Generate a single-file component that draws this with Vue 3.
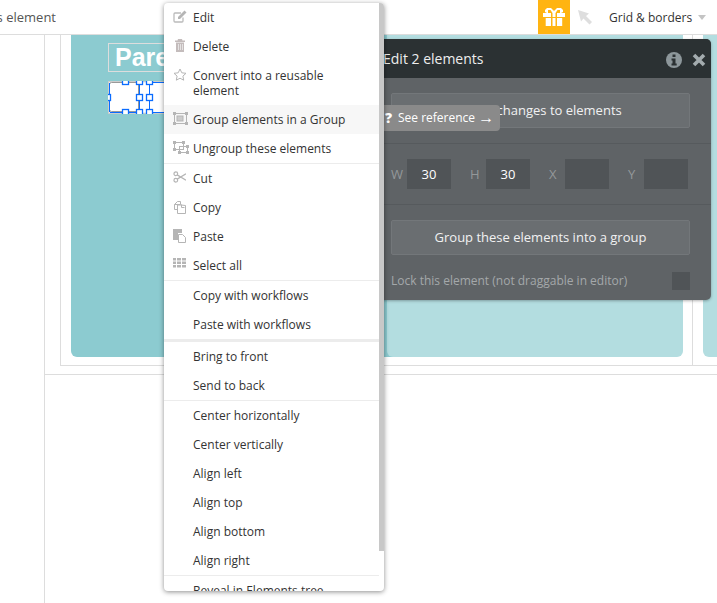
<script setup>
const itemsA = [
  { label: 'Cut', icon: 'cut' },
  { label: 'Copy', icon: 'copy' },
  { label: 'Paste', icon: 'paste' },
  { label: 'Select all', icon: 'grid' },
]
const aligns = ['Center horizontally', 'Center vertically', 'Align left', 'Align top', 'Align bottom', 'Align right']
const fields = [
  { k: 'W', v: '30' },
  { k: 'H', v: '30' },
  { k: 'X', v: '' },
  { k: 'Y', v: '' },
]
</script>

<template>
  <div class="page">
    <header class="topbar">
      <div class="crumb"><span>this element</span></div>
      <div class="spacer"></div>
      <div class="gift">
        <svg width="22" height="18" viewBox="0 0 22 18"><path fill="#fff" d="M4 0h4l3 3 3-3h4l2 2v2l-2 1h4v4H0V5h4L2 4V2z"/><path fill="#ffb412" d="M5 2h2.500l2 3H5zM17 2h-2.500l-2 3H17z"/><path fill="#fff" d="M2 10h16.500v8H2z" transform="translate(.7 0)"/><path fill="#ffb412" d="M8 5h1.500v13H8zM12.500 5H14v13h-1.500z"/></svg>
      </div>
      <svg class="cursor" width="17" height="17" viewBox="0 0 17 17"><path fill="#dedede" d="M1 1l11 3.500-3 2.500 6 6-2.500 2.500-6-6-2.500 3z"/></svg>
      <div class="grid-menu">Grid &amp; borders<i class="caret"></i></div>
    </header>

    <div class="canvas">
      <div class="line v1"></div>
      <div class="line v2"></div>
      <div class="line v3"></div>
      <div class="line h1"></div>
      <div class="line h2"></div>
      <div class="teal t1">
        <div class="parent">Parent</div>
      </div>
      <div class="teal t2"></div>
      <div class="teal t3"></div>
      <svg class="selection" width="60" height="33" viewBox="0 0 60 33">
        <rect x="0.500" y="0.500" width="59" height="32" fill="#e8f1f2" stroke="#ccc"/>
        <rect x="1.500" y="1.500" width="29" height="29" rx="2" fill="#fff" stroke="#999"/>
        <rect x="32" y="2" width="28" height="29" fill="#fff"/>
        <path stroke="#0a6cff" fill="none" d="M2 31.500h30M1.500 2v29M31.500 1v30M41.500 1.500h19M41.500 1.500v30h19"/>
        <g fill="#fff" stroke="#0a6cff" stroke-width="1.300">
          <rect x="14.500" y="-2.500" width="6" height="6"/>
          <rect x="14.500" y="28.500" width="6" height="6"/>
          <rect x="-2.500" y="13.500" width="5" height="6"/>
          <rect x="28.500" y="13.500" width="6" height="6"/>
          <rect x="28.500" y="-2.500" width="6" height="6"/>
          <rect x="28.500" y="28.500" width="6" height="6"/>
          <rect x="38.500" y="13.500" width="6" height="6"/>
          <rect x="38.500" y="-2.500" width="6" height="6"/>
          <rect x="38.500" y="28.500" width="6" height="6"/>
        </g>
      </svg>
    </div>

    <section class="panel">
      <div class="panel-head">
        <span>Edit 2 elements</span>
        <div class="head-icons">
          <svg width="16" height="16" viewBox="0 0 16 16"><circle cx="8" cy="8" r="8" fill="#8d979b"/><path fill="#2b3133" d="M6.500 2.500h3v2.500h-3zM5.500 6.500h4v5h1.200v2H5.500v-2h1v-3h-1z"/></svg>
          <svg width="14" height="14" viewBox="0 0 14 14"><path stroke="#a3abae" stroke-width="3.600" d="M2 2l10 10M12 2L2 12"/></svg>
        </div>
      </div>
      <div class="panel-block">
        <button class="pbtn">Apply changes to elements</button>
      </div>
      <div class="panel-block fields">
        <div v-for="f in fields" :key="f.k" class="field">
          <label>{{ f.k }}</label>
          <div class="input">{{ f.v }}</div>
        </div>
      </div>
      <div class="panel-last">
        <button class="pbtn">Group these elements into a group</button>
        <div class="lock">
          <span>Lock this element (not draggable in editor)</span>
          <i class="check"></i>
        </div>
      </div>
    </section>

    <div class="tooltip"><b>?</b>See reference <span class="arrow">→</span></div>

    <nav class="menu">
      <i class="scrollbar"></i>
      <div class="item">
        <svg class="ic" width="14" height="13" viewBox="0 0 14 13"><path fill="none" stroke="#bbb" stroke-width="1.300" d="M10 7.500V11a1 1 0 0 1-1 1H2a1 1 0 0 1-1-1V4a1 1 0 0 1 1-1h6"/><path fill="#b5b5b5" d="M5 7l6.500-6.500 2 2L7 9H5z"/></svg>
        Edit
      </div>
      <div class="item">
        <svg class="ic" width="14" height="13" viewBox="0 0 14 13"><path fill="#c4bcbc" d="M5 0h4l.5 1.500H12V3H2V1.500h2.500zM3 3.500h8V13H3z"/><path stroke="#eee" d="M5.500 5v6M7.500 5v6M9.500 5v6" fill="none" stroke-width=".8"/></svg>
        Delete
      </div>
      <div class="item two">
        <svg class="ic" width="14" height="13" viewBox="0 0 14 13"><path fill="none" stroke="#b5b5b5" d="M7 1l1.800 3.800 4.200.5-3.100 2.800.8 4.100L7 10.200l-3.700 2 .8-4.100L1 5.300l4.200-.5z"/></svg>
        Convert into a reusable element
      </div>
      <div class="item hover">
        <svg class="ic" width="15" height="13" viewBox="0 0 15 13"><rect x="1.500" y="1.500" width="12" height="10" fill="none" stroke="#b5b5b5"/><rect x="4" y="4" width="6" height="5" fill="#ccc" stroke="#b5b5b5"/><path fill="#b5b5b5" d="M0 0h3v3H0zM12 0h3v3h-3zM0 10h3v3H0zM12 10h3v3h-3z"/></svg>
        Group elements in a Group
      </div>
      <div class="item sep">
        <svg class="ic" width="16" height="13" viewBox="0 0 16 13"><rect x="1.500" y="1.500" width="9" height="7" fill="none" stroke="#b5b5b5"/><rect x="6.500" y="5.500" width="8" height="6" fill="none" stroke="#b5b5b5"/><path fill="#b5b5b5" d="M0 0h3v3H0zM9 0h3v3H9zM0 7h3v3H0zM13 4h3v3h-3zM5 10h3v3H5zM13 10h3v3h-3z"/></svg>
        Ungroup these elements
      </div>
      <div v-for="(it, i) in itemsA" :key="it.label" class="item" :class="{ sep: i === 3 }">
        <svg v-if="it.icon === 'cut'" class="ic" width="13" height="12" viewBox="0 0 14 13"><circle cx="3" cy="3" r="2" fill="none" stroke="#b5b5b5" stroke-width="1.300"/><circle cx="3" cy="10" r="2" fill="none" stroke="#b5b5b5" stroke-width="1.300"/><path stroke="#b5b5b5" stroke-width="1.300" d="M4.500 4.200L14 10M4.500 8.800L14 3"/></svg>
        <svg v-else-if="it.icon === 'copy'" class="ic" width="13" height="14" viewBox="0 0 13 14"><path fill="none" stroke="#b5b5b5" d="M4.500 1.500h3v3h-6v5h3M4.500 1.500l-3 3"/><path fill="none" stroke="#b5b5b5" d="M8 5h-3.500v8.500h8V5.500zM8.500 4.500v3h3"/></svg>
        <svg v-else-if="it.icon === 'paste'" class="ic" width="13" height="14" viewBox="0 0 13 14"><path fill="#b5b5b5" d="M0 0h9v4H5v7H0z"/><path fill="#fff" stroke="#b5b5b5" d="M5.500 5.500h4l3 3v5h-7z"/></svg>
        <svg v-else class="ic" width="13" height="10" viewBox="0 0 13 10"><path fill="#b5b5b5" d="M0 0h3v2.500H0zM4 0h4v2.500H4zM9 0h4v2.500H9zM0 3.500h3V6H0zM4 3.500h4V6H4zM9 3.500h4V6H9zM0 7h3v2.500H0zM4 7h4v2.500H4zM9 7h4v2.500H9z"/></svg>
        {{ it.label }}
      </div>
      <div class="item">Copy with workflows</div>
      <div class="item thick">Paste with workflows</div>
      <div class="item">Bring to front</div>
      <div class="item sep">Send to back</div>
      <div v-for="(a, i) in aligns" :key="a" class="item" :class="{ sep: i === 5 }">{{ a }}</div>
      <div class="item">Reveal in Elements tree</div>
    </nav>
  </div>
</template>

<style>
html, body { margin: 0; background: #fff; }
</style>

<style scoped>
.page {
  position: relative;
  width: 717px;
  height: 603px;
  overflow: hidden;
  background: #fff;
  font-family: "Open Sans", sans-serif;
  font-size: 13px;
  color: #333;
}
.topbar {
  display: flex;
  align-items: center;
  height: 34px;
  border-bottom: 1px solid #ddd;
  background: #fff;
}
.crumb {
  display: flex;
  justify-content: flex-end;
  width: 56px;
  overflow: hidden;
  white-space: nowrap;
  color: #555;
}
.spacer { flex: 1; }
.gift {
  display: flex;
  align-items: center;
  justify-content: center;
  width: 32px;
  height: 34px;
  background: #ffb412;
}
.cursor { margin: 0 15px 0 7px; }
.grid-menu {
  display: flex;
  align-items: center;
  width: 108px;
  font-size: 12px;
  color: #333;
  white-space: nowrap;
}
.caret {
  margin-left: 6px;
  border: 4px solid transparent;
  border-top: 5px solid #c4c4c4;
  border-bottom: 0;
}

.canvas { position: absolute; left: 0; top: 35px; width: 717px; height: 568px; }
.line { position: absolute; background: #ddd; }
.v1 { left: 44px; top: 0; width: 1px; height: 568px; }
.v2 { left: 60px; top: 0; width: 1px; height: 330px; }
.v3 { left: 692px; top: 0; width: 1px; height: 330px; }
.h1 { left: 60px; top: 330px; right: 0; height: 1px; }
.h2 { left: 44px; top: 339px; right: 0; height: 1px; }
.teal {
  position: absolute;
  top: 0;
  height: 322px;
  border-radius: 0 0 6px 6px;
  background: #b3dde0;
}
.t1 { left: 71px; width: 340px; background: #8ccbd0; }
.t2 { left: 387px; width: 296px; }
.t3 { left: 703px; width: 40px; }
.parent {
  position: absolute;
  left: 37px;
  top: 8px;
  width: 200px;
  height: 27px;
  padding-left: 6px;
  border: 1px solid #ddd;
  font: bold 25px/26px "Liberation Sans", sans-serif;
  color: #fff;
}
.selection { position: absolute; left: 108px; top: 46px; }

.panel {
  position: absolute;
  left: 372px;
  top: 39px;
  width: 339px;
  height: 261px;
  border-radius: 5px;
  overflow: hidden;
  background: #5f6366;
  box-shadow: 0 1px 3px rgba(0, 0, 0, .3);
}
.panel-head {
  display: flex;
  align-items: center;
  justify-content: space-between;
  height: 39px;
  padding: 0 5px 0 11px;
  background: #2b3133;
  color: #eee;
  font-size: 14px;
}
.head-icons { display: flex; align-items: center; gap: 10px; padding-top: 2px; }
.panel-block {
  box-sizing: border-box;
  height: 66px;
  padding: 15px 21px 0 19px;
  border-bottom: 1px solid #565a5d;
}
.panel-block.fields {
  display: flex;
  height: 61px;
  padding-top: 15px;
  padding-right: 23px;
  gap: 19px;
}
.field { display: flex; width: 60px; align-items: flex-start; }
.field label {
  width: 16px;
  line-height: 30px;
  color: #94989a;
  font-size: 13px;
}
.input {
  width: 44px;
  height: 30px;
  background: #505457;
  color: #fff;
  text-align: center;
  line-height: 31px;
}
.pbtn {
  display: block;
  width: 299px;
  height: 35px;
  padding: 0 0 2px;
  border: 1px solid #73777a;
  border-radius: 2px;
  background: #6a6e71;
  color: #f1f1f1;
  font: 13px "Open Sans", sans-serif;
}
.panel-last { padding: 15px 21px 0 19px; }
.lock {
  display: flex;
  align-items: flex-start;
  justify-content: space-between;
  margin-top: 17px;
  color: #a4a8aa;
  font-size: 12px;
  line-height: 17px;
}
.check { width: 18px; height: 18px; background: #505457; }

.tooltip {
  position: absolute;
  left: 378px;
  top: 105px;
  width: 122px;
  height: 26px;
  box-sizing: border-box;
  padding-left: 7px;
  border-radius: 4px;
  background: #8a8a8a;
  color: #fff;
  font-size: 12px;
  line-height: 26px;
  white-space: nowrap;
}
.tooltip b { display: inline-block; width: 13px; font-size: 14px; font-weight: 800; vertical-align: top; }
.arrow { font-size: 16px; line-height: 20px; vertical-align: -1px; }

.menu {
  position: absolute;
  left: 164px;
  top: 3px;
  width: 220px;
  height: 588px;
  overflow: hidden;
  border-radius: 4px;
  background: #fff;
  box-shadow: 0 1px 5px rgba(0, 0, 0, .45);
  font-size: 12px;
}
.scrollbar {
  position: absolute;
  right: 0;
  top: 0;
  width: 5px;
  height: 548px;
  background: #c8c8c8;
}
.item {
  position: relative;
  box-sizing: border-box;
  width: 215px;
  padding: 7px 20px 0 29px;
  height: 29px;
  line-height: 16px;
  color: #333;
  white-space: nowrap;
}
.item.two { height: 44px; line-height: 15px; padding-top: 7px; padding-right: 30px; white-space: normal; }
.item.hover { background: #f7f7f7; }
.item.sep { height: 30px; border-bottom: 1px solid #ececec; }
.item.thick { height: 32px; border-bottom: 3px solid #ececec; }
.ic { position: absolute; left: 9px; top: 7px; }
</style>
